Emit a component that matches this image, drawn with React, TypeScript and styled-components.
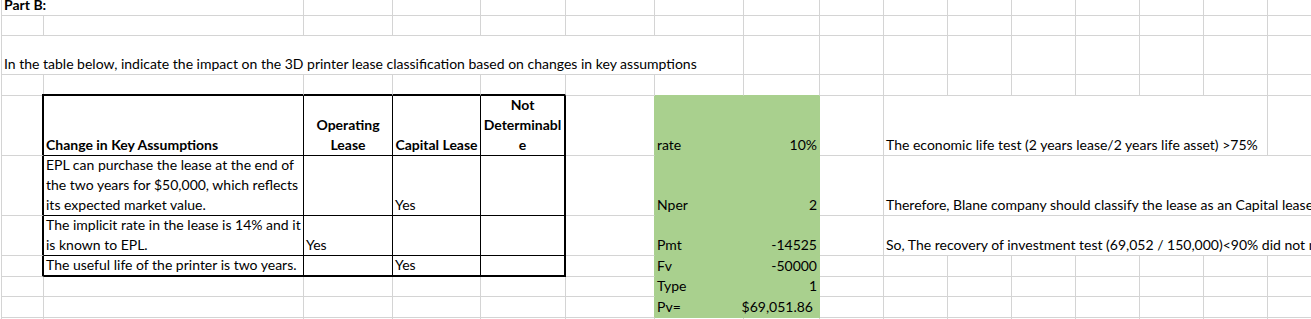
import React from "react";
import styled, { createGlobalStyle } from "styled-components";

const GRID = "#d4d4d4";
const GREEN = "#a9d08e";
const THIN = "1px solid #000";
const THICK = "2px solid #000";
const GLINE = `1px solid ${GREEN}`;
const DEF = `1px solid ${GRID}`;

const COLS = [42, 260, 89, 88, 85, 89, 89, 76, 64, 64, 64, 64, 64, 64, 64, 64];
const ROWS = [16, 20, 39, 21, 60, 60, 40, 21, 20, 21, 20];

const GlobalStyle = createGlobalStyle`
  html, body { margin: 0; padding: 0; background: #fff; overflow: hidden; }
`;

const Page = styled.div`
  width: 1311px;
  height: 319px;
  overflow: hidden;
  background: #fff;
`;

const Sheet = styled.div<{ $cols: string; $rows: string }>`
  display: grid;
  grid-template-columns: ${(p) => p.$cols};
  grid-template-rows: ${(p) => p.$rows};
  width: max-content;
  margin-left: 1px;
  border-left: 1px solid ${GRID};
  font-family: Lato, "Open Sans", sans-serif;
  font-size: 14px;
  color: #000;
`;

type Align = "left" | "center" | "right";

const Cell = styled.div<{
  $span: number;
  $align: Align;
  $bold: boolean;
  $fill?: string;
  $rb: string;
  $bb: string;
  $corner: boolean;
  $pr: number;
}>`
  grid-column: span ${(p) => p.$span};
  box-sizing: border-box;
  min-width: 0;
  display: flex;
  flex-direction: column;
  justify-content: flex-end;
  align-items: ${(p) =>
    p.$align === "center" ? "center" : p.$align === "right" ? "flex-end" : "flex-start"};
  text-align: ${(p) => p.$align};
  padding: 0 ${(p) => p.$pr}px 0 2px;
  border-right: ${(p) => p.$rb};
  border-bottom: ${(p) => p.$bb};
  background: ${(p) => p.$fill ?? "transparent"};
  box-shadow: ${(p) => (p.$corner ? "-2px -2px 0 #000" : "none")};
  font-weight: ${(p) => (p.$bold ? 700 : 400)};
  line-height: 20px;
  white-space: nowrap;
`;

const Lines = styled.span`
  display: block;
`;

type Spec = {
  span?: number;
  text?: string[];
  align?: Align;
  bold?: boolean;
  fill?: string;
  rb?: string;
  bb?: string;
  corner?: boolean;
  pr?: number;
};

const blanks = (n: number): Spec[] => Array.from({ length: n }, () => ({}));
const green = (text: string, align: Align = "left", pr = 2): Spec => ({
  text: [text],
  align,
  fill: GREEN,
  rb: GLINE,
  bb: GLINE,
  pr,
});
const fEdge: Spec = { rb: GLINE };

const DATA: Spec[][] = [
  [{ span: 2, text: ["Part B:"], bold: true }, ...blanks(14)],
  blanks(16),
  [
    {
      span: 7,
      text: [
        "In the table below, indicate the impact on the 3D printer lease classification based on changes in key assumptions",
      ],
    },
    ...blanks(9),
  ],
  [
    {},
    { bb: THICK },
    { bb: THICK },
    { bb: THICK },
    { bb: THICK },
    {},
    { bb: GLINE },
    { bb: GLINE },
    ...blanks(8),
  ],
  [
    { rb: THICK },
    { text: ["Change in Key Assumptions"], bold: true, rb: THIN, bb: THIN, corner: true },
    { text: ["Operating", "Lease"], bold: true, align: "center", rb: THIN, bb: THIN },
    { text: ["Capital Lease"], bold: true, align: "center", rb: THIN, bb: THIN },
    { text: ["Not", "Determinabl", "e"], bold: true, align: "center", rb: THICK, bb: THIN },
    fEdge,
    green("rate"),
    green("10%", "right"),
    {},
    { span: 6, text: ["The economic life test (2 years lease/2 years life asset) >75%"] },
    {},
  ],
  [
    { rb: THICK },
    {
      text: [
        "EPL can purchase the lease at the end of",
        "the two years for $50,000, which reflects",
        "its expected market value.",
      ],
      rb: THIN,
      bb: THIN,
    },
    { rb: THIN, bb: THIN },
    { text: ["Yes"], rb: THIN, bb: THIN },
    { rb: THICK, bb: THIN },
    fEdge,
    green("Nper"),
    green("2", "right"),
    {},
    {
      span: 7,
      text: ["Therefore, Blane company should classify the lease as an Capital lease."],
    },
  ],
  [
    { rb: THICK },
    {
      text: ["The implicit rate in the lease is 14% and it", "is known to EPL."],
      rb: THIN,
      bb: THIN,
    },
    { text: ["Yes"], rb: THIN, bb: THIN },
    { rb: THIN, bb: THIN },
    { rb: THICK, bb: THIN },
    fEdge,
    green("Pmt"),
    green("-14525", "right"),
    {},
    {
      span: 7,
      text: ["So, The recovery of investment test (69,052 / 150,000)<90% did not meet."],
    },
  ],
  [
    { rb: THICK },
    { text: ["The useful life of the printer is two years."], rb: THIN, bb: THICK },
    { rb: THIN, bb: THICK },
    { text: ["Yes"], rb: THIN, bb: THICK },
    { rb: THICK, bb: THICK },
    fEdge,
    green("Fv"),
    green("-50000", "right"),
    ...blanks(8),
  ],
  [...blanks(5), fEdge, green("Type"), green("1", "right"), ...blanks(8)],
  [...blanks(5), fEdge, green("Pv="), green("$69,051.86", "right", 6), ...blanks(8)],
  blanks(16),
];

export default function App() {
  return (
    <Page>
      <GlobalStyle />
      <Sheet
        $cols={COLS.map((c) => `${c}px`).join(" ")}
        $rows={ROWS.map((r) => `${r}px`).join(" ")}
      >
        {DATA.map((row, ri) =>
          row.map((c, ci) => (
            <Cell
              key={`${ri}-${ci}`}
              $span={c.span ?? 1}
              $align={c.align ?? "left"}
              $bold={!!c.bold}
              $fill={c.fill}
              $rb={c.rb ?? DEF}
              $bb={c.bb ?? DEF}
              $corner={!!c.corner}
              $pr={c.pr ?? 2}
            >
              {c.text && (
                <Lines>
                  {c.text.map((t, i) => (
                    <React.Fragment key={i}>
                      {i > 0 && <br />}
                      {t}
                    </React.Fragment>
                  ))}
                </Lines>
              )}
            </Cell>
          ))
        )}
      </Sheet>
    </Page>
  );
}
